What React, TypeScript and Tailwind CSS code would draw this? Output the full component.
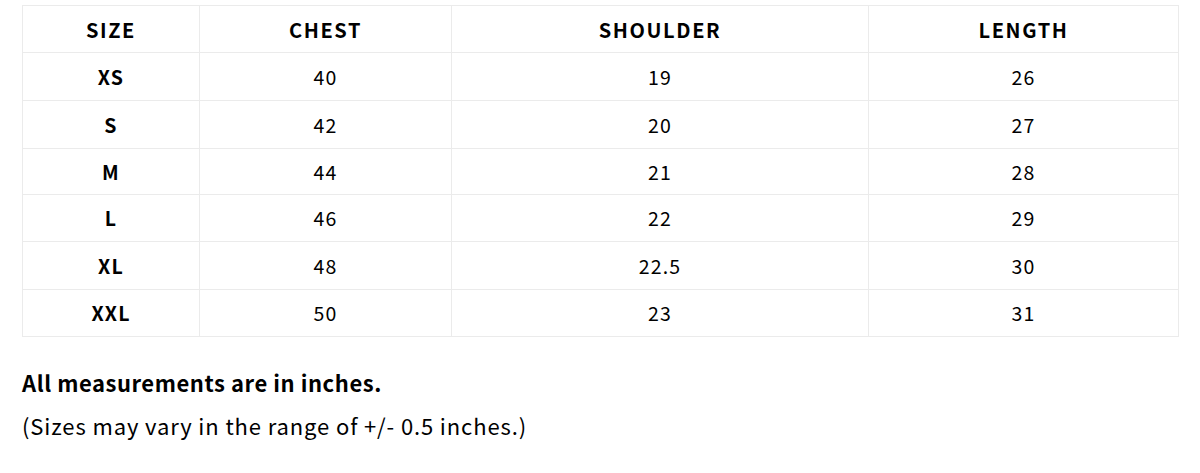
import React from "react";

const rows = [
  ["XS", "40", "19", "26"],
  ["S", "42", "20", "27"],
  ["M", "44", "21", "28"],
  ["L", "46", "22", "29"],
  ["XL", "48", "22.5", "30"],
  ["XXL", "50", "23", "31"],
];

const heights = ["h-[48px]", "h-[48px]", "h-[46px]", "h-[47px]", "h-[48px]", "h-[47px]"];

const font = { fontFamily: '"Noto Sans CJK JP", "Noto Sans", sans-serif' };

export default function App() {
  return (
    <div className="w-[1200px] h-[473px] bg-white text-black" style={font}>
      <div className="pt-[5px] pl-[22px]">
        <table className="w-[1156px] border-collapse table-fixed">
          <colgroup>
            <col className="w-[177px]" />
            <col className="w-[252px]" />
            <col className="w-[417px]" />
            <col className="w-[310px]" />
          </colgroup>
          <thead>
            <tr className="h-[47px]">
              {["SIZE", "CHEST", "SHOULDER", "LENGTH"].map((h) => (
                <th key={h} className="border border-[#ebebeb] text-center font-bold text-[20px] tracking-[0.08em] pt-[2px] pb-0 px-0">
                  {h}
                </th>
              ))}
            </tr>
          </thead>
          <tbody>
            {rows.map((r, ri) => (
              <tr key={r[0]} className={heights[ri]}>
                {r.map((c, i) => (
                  <td
                    key={i}
                    className={`border border-[#ebebeb] text-center text-[19.5px] tracking-[0.06em] p-0 ${i === 0 ? "font-bold" : "font-normal"}`}
                  >
                    {c}
                  </td>
                ))}
              </tr>
            ))}
          </tbody>
        </table>
        <p className="mt-[31px] text-[22px] font-bold tracking-[0.025em] leading-[28px]">All measurements are in inches.</p>
        <p className="mt-[15px] text-[22px] tracking-[0.04em] leading-[28px]">(Sizes may vary in the range of +/- 0.5 inches.)</p>
      </div>
    </div>
  );
}
